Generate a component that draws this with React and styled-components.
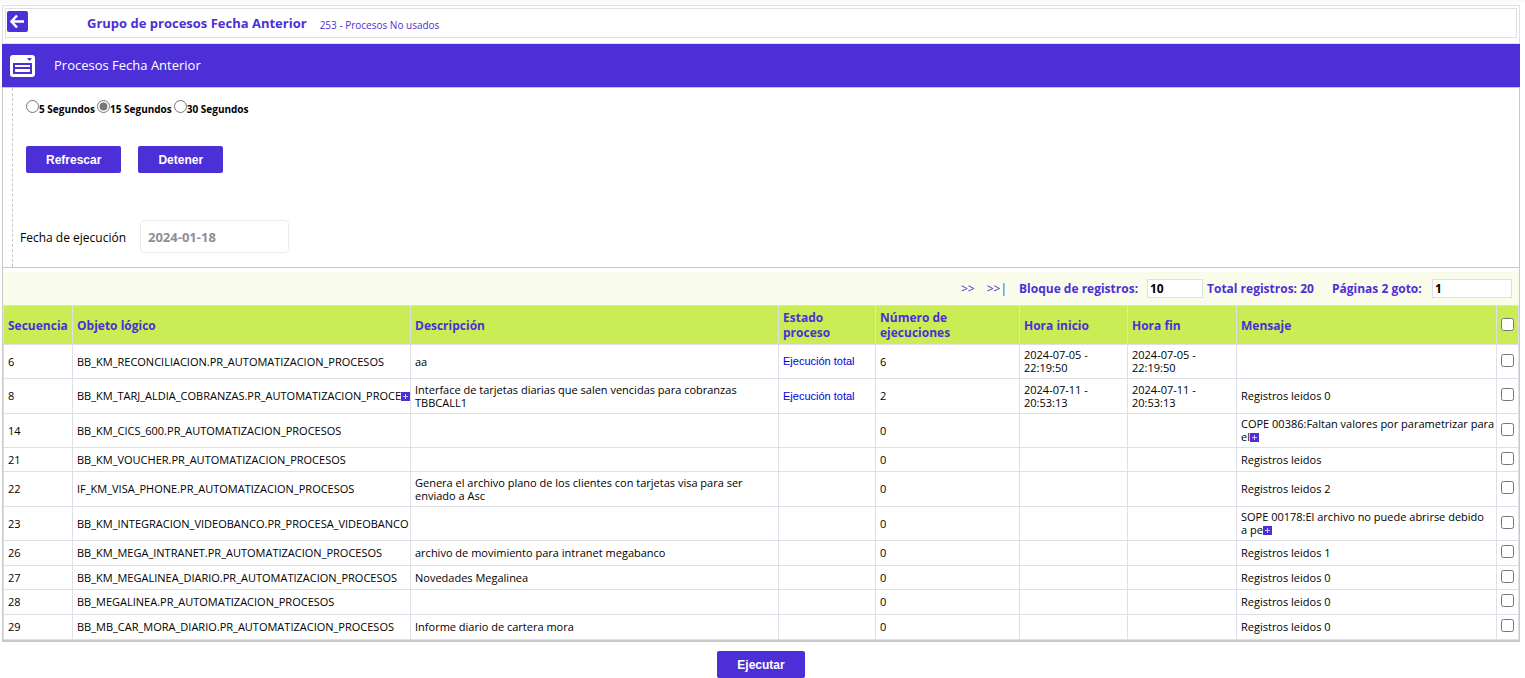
import React, { useState } from 'react';
import styled, { createGlobalStyle } from 'styled-components';

const violet = '#4c2fd7';
const line = '#dfdfe8';
const sans = '"Open Sans", "Noto Sans", sans-serif';

const GlobalStyle = createGlobalStyle`
  * { box-sizing: border-box; }
  body {
    margin: 0;
    background: #fff;
    color: #000;
    font-family: ${sans};
    font-size: 11px;
  }
`;

const Page = styled.div`
  padding: 2px 5px 0 2px;
  border-top: 3px solid #fafafa;
`;

const HeaderFrame = styled.header`
  padding: 2px 2px 5px;
  border: 1px solid ${line};
`;

const HeaderInner = styled.div`
  display: flex;
  align-items: center;
  height: 30px;
  padding-left: 1px;
  border: 1px solid ${line};
`;

const BackButton = styled.button`
  display: flex;
  width: 21px;
  height: 21px;
  margin: 0 59px 4px 0;
  padding: 0;
  border: 0;
  border-radius: 2px;
  background: ${violet};
  cursor: pointer;
`;

const Title = styled.h1`
  margin: 0 13px 0 0;
  color: ${violet};
  font-size: 13px;
  line-height: 18px;
  font-weight: 700;
`;

const Subtitle = styled.span`
  padding-top: 3px;
  color: ${violet};
  font-size: 10px;
  line-height: 14px;
`;

const Banner = styled.div`
  display: flex;
  align-items: center;
  height: 43px;
  padding-left: 8px;
  gap: 18px;
  background: ${violet};
  color: #fff;
`;

const BannerTitle = styled.h2`
  margin: 0;
  padding-bottom: 2px;
  font-size: 13px;
  font-weight: 400;
`;

const Panel = styled.section`
  padding-left: 9px;
  border: 1px solid #c8c8c8;
  border-bottom: 0;
`;

const Form = styled.form`
  height: 179px;
  padding: 11px 0 0 7px;
  border-left: 1px dashed #c8c8c8;
`;

const RadioRow = styled.div`
  display: flex;
  gap: 2px;
  padding-left: 6px;
`;

const RadioLabel = styled.label`
  display: flex;
  font-size: 10px;
  line-height: 20px;
  font-weight: 700;

  input {
    width: 13px;
    height: 13px;
    margin: 1px 0 0;
    accent-color: #767676;
  }
`;

const ButtonRow = styled.div`
  display: flex;
  gap: 17px;
  margin: 27px 0 47px 6px;
`;

const ActionButton = styled.button`
  height: 27px;
  padding: 0 20px;
  border: 0;
  border-radius: 2px;
  background: ${violet};
  color: #fff;
  font: 700 12px "Liberation Sans", Arial, sans-serif;
  cursor: pointer;
`;

const Field = styled.div`
  display: flex;
  align-items: center;

  label {
    min-width: 120px;
    padding-top: 2px;
    font-size: 12px;
  }
`;

const DateInput = styled.input`
  width: 149px;
  height: 33px;
  padding: 0 7px;
  border: 1px solid #ececf0;
  border-radius: 4px;
  background: #fff;
  color: #8e8e96;
  font: 700 13px ${sans};
`;

const ListPanel = styled.section`
  padding-top: 4px;
  border: 1px solid #c8c8c8;
  border-bottom-width: 2px;
`;

const Pager = styled.nav`
  display: flex;
  align-items: center;
  justify-content: flex-end;
  height: 33px;
  padding-right: 7px;
  background: #fafceb;
  color: ${violet};
  font-size: 12px;
  font-weight: 700;

  a {
    margin-right: 12px;
    color: ${violet};
    font-weight: 400;
    text-decoration: none;
  }
`;

const PagerLabel = styled.label`
  min-width: ${(p) => p.$width}px;
`;

const PagerInput = styled.input`
  width: ${(p) => p.$width}px;
  height: 19px;
  margin-right: ${(p) => p.$after || 0}px;
  padding: 0 2px;
  border: 1px solid ${line};
  background: #fff;
  color: #000;
  font: 700 12px ${sans};
`;

const Total = styled.span`
  min-width: 125px;
`;

const Table = styled.table`
  width: 100%;
  border-collapse: collapse;
  table-layout: fixed;
`;

const HeadCell = styled.th`
  height: 39px;
  padding: 0 4px;
  border: 1px solid ${line};
  background: #caed56;
  color: ${violet};
  font-size: 12px;
  line-height: 15px;
  text-align: left;
`;

const Row = styled.tr`
  height: ${(p) => p.$height}px;
`;

const Cell = styled.td`
  padding: 0 0 1px 4px;
  border: 1px solid ${line};
  line-height: 13px;
  white-space: ${(p) => (p.$nowrap ? 'pre' : 'normal')};
`;

const Check = styled.input`
  display: block;
  width: 13px;
  height: 13px;
  margin: 0 0 2px;
`;

const StatusLink = styled.a`
  color: #0000e0;
  font-family: "Liberation Sans", Arial, sans-serif;
  text-decoration: none;
`;

const MoreButton = styled.button`
  display: inline-flex;
  width: 9px;
  height: 9px;
  padding: 0;
  border: 0;
  background: ${violet};
  vertical-align: -1px;
  cursor: pointer;
`;

const Footer = styled.div`
  display: flex;
  justify-content: center;
  padding-top: 9px;
`;

function More() {
  return (
    <MoreButton type="button" aria-label="Ver más">
      <svg width="9" height="9" viewBox="0 0 9 9" stroke="#cfc6f8">
        <path d="M2 4.5h5M4.5 2v5" />
      </svg>
    </MoreButton>
  );
}

const columns = [
  { label: 'Secuencia', width: 69 },
  { label: 'Objeto lógico', width: 338 },
  { label: 'Descripción' },
  { label: 'Estado proceso', width: 97 },
  { label: 'Número de ejecuciones', width: 144 },
  { label: 'Hora inicio', width: 108 },
  { label: 'Hora fin', width: 109 },
  { label: 'Mensaje', width: 260 },
];

const Col = styled.col`
  width: ${(p) => (p.$width ? `${p.$width}px` : 'auto')};
`;

const rows = [
  { id: 6, height: 34, object: 'BB_KM_RECONCILIACION.PR_AUTOMATIZACION_PROCESOS', text: 'aa', status: 'Ejecución total', runs: 6, time: '2024-07-05 -\n22:19:50' },
  { id: 8, height: 35, object: 'BB_KM_TARJ_ALDIA_COBRANZAS.PR_AUTOMATIZACION_PROCE', moreObject: true, text: 'Interface de tarjetas diarias que salen vencidas para cobranzas TBBCALL1', status: 'Ejecución total', runs: 2, time: '2024-07-11 -\n20:53:13', message: 'Registros leidos 0' },
  { id: 14, height: 34, object: 'BB_KM_CICS_600.PR_AUTOMATIZACION_PROCESOS', runs: 0, message: 'COPE 00386:Faltan valores por parametrizar para\nel', moreMessage: true },
  { id: 21, height: 24, object: 'BB_KM_VOUCHER.PR_AUTOMATIZACION_PROCESOS', runs: 0, message: 'Registros leidos' },
  { id: 22, height: 35, object: 'IF_KM_VISA_PHONE.PR_AUTOMATIZACION_PROCESOS', text: 'Genera el archivo plano de los clientes con tarjetas visa para ser enviado a Asc', runs: 0, message: 'Registros leidos 2' },
  { id: 23, height: 34, object: 'BB_KM_INTEGRACION_VIDEOBANCO.PR_PROCESA_VIDEOBANCO', runs: 0, message: 'SOPE 00178:El archivo no puede abrirse debido\na pe', moreMessage: true },
  { id: 26, height: 25, object: 'BB_KM_MEGA_INTRANET.PR_AUTOMATIZACION_PROCESOS', text: 'archivo de movimiento para intranet megabanco', runs: 0, message: 'Registros leidos 1' },
  { id: 27, height: 24, object: 'BB_KM_MEGALINEA_DIARIO.PR_AUTOMATIZACION_PROCESOS', text: 'Novedades Megalinea', runs: 0, message: 'Registros leidos 0' },
  { id: 28, height: 25, object: 'BB_MEGALINEA.PR_AUTOMATIZACION_PROCESOS', runs: 0, message: 'Registros leidos 0' },
  { id: 29, height: 25, object: 'BB_MB_CAR_MORA_DIARIO.PR_AUTOMATIZACION_PROCESOS', text: 'Informe diario de cartera mora', runs: 0, message: 'Registros leidos 0' },
];

export default function App() {
  const [seconds, setSeconds] = useState(15);
  return (
    <>
      <GlobalStyle />
      <Page>
        <HeaderFrame>
          <HeaderInner>
            <BackButton type="button" aria-label="Volver">
              <svg width="21" height="21" viewBox="0 0 21 21" fill="none" stroke="#fff" strokeWidth="2.500">
                <path d="M17 10.5H5M10 4.500l-5.500 6 5.500 6" />
              </svg>
            </BackButton>
            <Title>Grupo de procesos Fecha Anterior</Title>
            <Subtitle>253 - Procesos No usados</Subtitle>
          </HeaderInner>
        </HeaderFrame>
        <Banner>
          <svg width="26" height="22" viewBox="0 0 26 22" aria-hidden="true">
            <rect width="25" height="22" rx="3" fill="#fff" />
            <path d="M17 3h5l-2.500 3z" fill={violet} />
            <path d="M3 8h19v11H3z" fill={violet} />
            <path d="M5 10h15v2H5zM5 14h15v3H5z" fill="#fff" />
          </svg>
          <BannerTitle>Procesos Fecha Anterior</BannerTitle>
        </Banner>
        <Panel>
          <Form onSubmit={(e) => e.preventDefault()}>
            <RadioRow>
              {[5, 15, 30].map((n) => (
                <RadioLabel key={n}>
                  <input type="radio" name="seconds" checked={seconds === n} onChange={() => setSeconds(n)} />
                  {n} Segundos
                </RadioLabel>
              ))}
            </RadioRow>
            <ButtonRow>
              <ActionButton type="button">Refrescar</ActionButton>
              <ActionButton type="button">Detener</ActionButton>
            </ButtonRow>
            <Field>
              <label htmlFor="date">Fecha de ejecución</label>
              <DateInput id="date" defaultValue="2024-01-18" readOnly />
            </Field>
          </Form>
        </Panel>
        <ListPanel>
          <Pager>
            <a href="#next">&gt;&gt;</a>
            <a href="#last">&gt;&gt;|</a>
            <PagerLabel htmlFor="block" $width={128}>Bloque de registros:</PagerLabel>
            <PagerInput id="block" $width={56} $after={4} defaultValue="10" />
            <Total>Total registros: 20</Total>
            <PagerLabel htmlFor="goto" $width={100}>Páginas 2 goto:</PagerLabel>
            <PagerInput id="goto" $width={80} defaultValue="1" />
          </Pager>
          <Table>
            <colgroup>
              {columns.map((c) => <Col key={c.label} $width={c.width} />)}
              <Col $width={22} />
            </colgroup>
            <thead>
              <tr>
                {columns.map((c) => <HeadCell key={c.label}>{c.label}</HeadCell>)}
                <HeadCell><Check type="checkbox" aria-label="Seleccionar todos" /></HeadCell>
              </tr>
            </thead>
            <tbody>
              {rows.map((r) => (
                <Row key={r.id} $height={r.height}>
                  <Cell>{r.id}</Cell>
                  <Cell $nowrap>{r.object}{r.moreObject && <More />}</Cell>
                  <Cell>{r.text}</Cell>
                  <Cell>{r.status && <StatusLink href="#status">{r.status}</StatusLink>}</Cell>
                  <Cell>{r.runs}</Cell>
                  <Cell $nowrap>{r.time}</Cell>
                  <Cell $nowrap>{r.time}</Cell>
                  <Cell $nowrap>{r.message}{r.moreMessage && <More />}</Cell>
                  <Cell><Check type="checkbox" aria-label={`Seleccionar ${r.id}`} /></Cell>
                </Row>
              ))}
            </tbody>
          </Table>
        </ListPanel>
        <Footer>
          <ActionButton type="button">Ejecutar</ActionButton>
        </Footer>
      </Page>
    </>
  );
}
